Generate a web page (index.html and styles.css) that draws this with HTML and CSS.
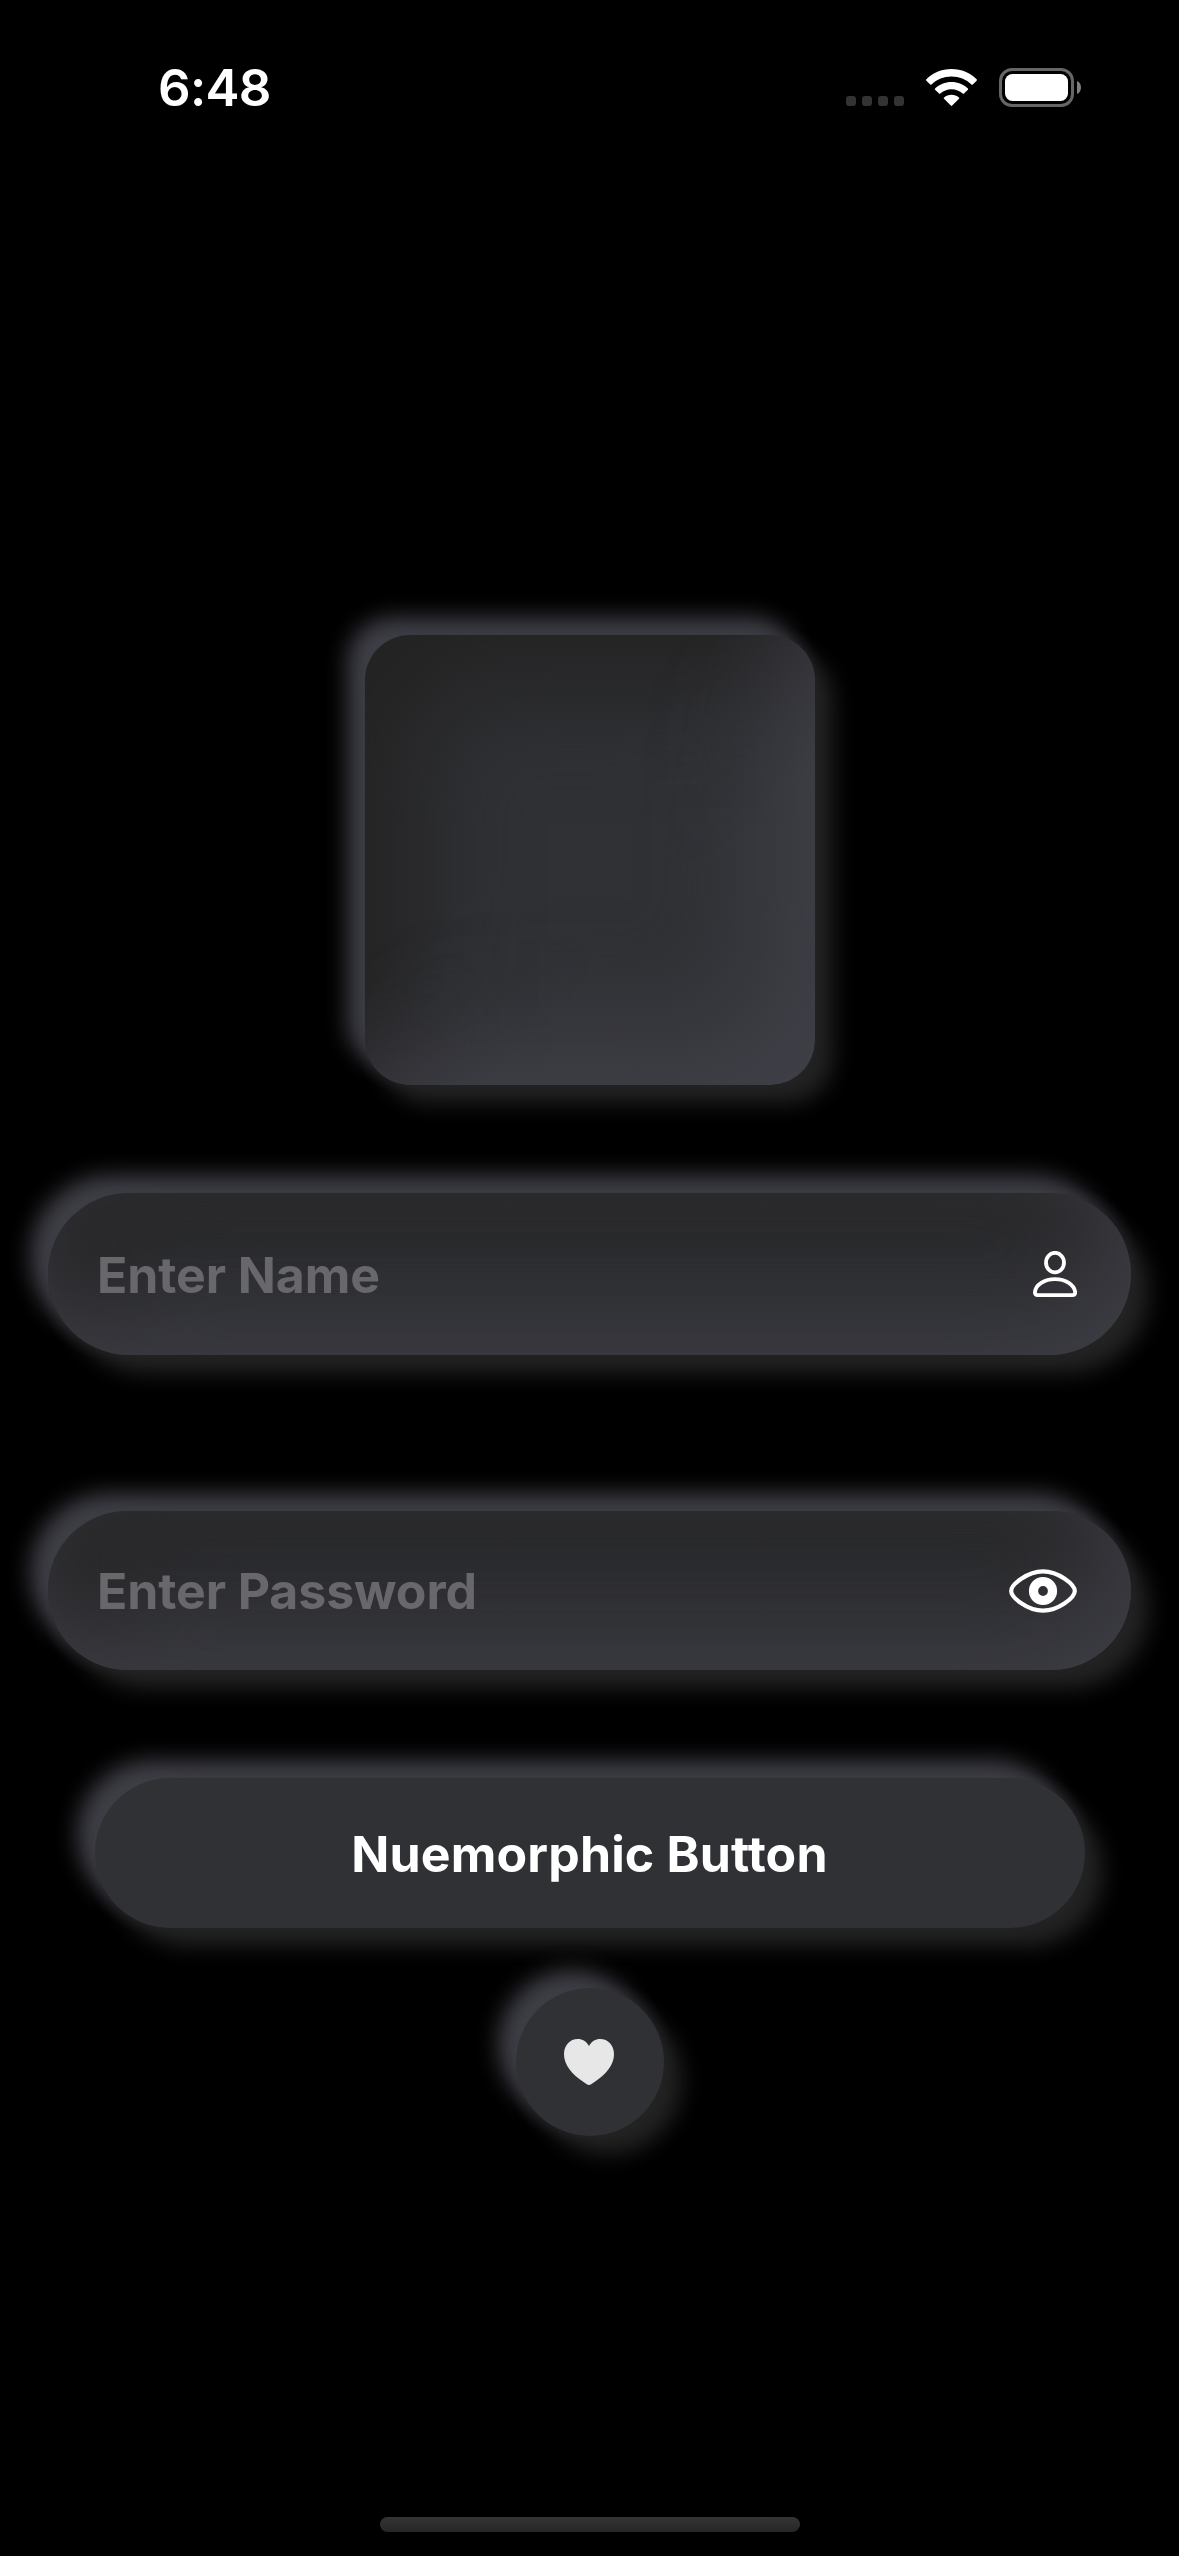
FILE: index.html
```html
<!DOCTYPE html>
<html lang="en">
<head>
<meta charset="utf-8">
<title>Neumorphic form</title>
<link rel="stylesheet" href="styles.css">
</head>
<body>
<div class="screen">
  <header class="status-bar">
    <span class="time">6:48</span>
    <div class="indicators">
      <div class="cellular"><i></i><i></i><i></i><i></i></div>
      <svg class="wifi" viewBox="0 0 51 37" width="51" height="37" fill="#fff">
        <path d="M25.5 0C35.500 0 44.500 4 50.600 10.300Q51.300 11 50.600 11.700L46.800 15.500Q46.200 16.100 45.500 15.400C40.200 10.300 33.200 7.400 25.500 7.400S10.800 10.300 5.500 15.400Q4.800 16.100 4.200 15.500L.4 11.700Q-.3 11 .4 10.300C6.500 4 15.500 0 25.500 0Z"/>
        <path d="M25.500 13C31.900 13 37.700 15.500 41.900 19.500Q42.500 20.200 41.900 20.800L38 24.600Q37.400 25.200 36.700 24.600C33.700 21.900 29.800 20.300 25.500 20.300S17.300 21.900 14.300 24.600Q13.600 25.200 13 24.600L9.100 20.800Q8.500 20.200 9.100 19.500C13.300 15.500 19.100 13 25.500 13Z"/>
        <path d="M25.500 25.800C28.300 25.800 30.900 26.800 32.900 28.500Q33.600 29.200 33 29.800L26.200 36.600Q25.500 37.200 24.800 36.600L18 29.800Q17.400 29.200 18.100 28.500C20.100 26.800 22.700 25.800 25.500 25.800Z"/>
      </svg>
      <svg class="battery" viewBox="0 0 82 39" width="82" height="39">
        <rect x="1.500" y="1.500" width="72" height="36" rx="11.500" fill="none" stroke="#666" stroke-width="3"/>
        <rect x="6" y="6" width="63" height="27" rx="7.500" fill="#fff"/>
        <path d="M78 13C80.700 14.200 82 16.600 82 19.500S80.700 24.800 78 26Z" fill="#808080"/>
      </svg>
    </div>
  </header>

  <main class="content">
    <div class="tile"></div>

    <div class="field field-name">
      <span class="placeholder">Enter Name</span>
      <svg viewBox="0 0 44 46" width="44" height="46" fill="none" stroke="#fff" stroke-width="3.800">
        <ellipse cx="22" cy="11.600" rx="9" ry="9.800"/>
        <path d="M4.800 44.100H39.200Q42.200 44.100 42.200 41.200C41.400 33.800 32.600 28.100 22 28.100S2.600 33.800 1.900 41.200Q1.900 44.100 4.800 44.100Z"/>
      </svg>
    </div>

    <div class="field field-password">
      <span class="placeholder">Enter Password</span>
      <svg viewBox="0 0 68 44" width="68" height="44">
        <path d="M34 2.300C49.500 2.300 65.800 15.500 65.800 22S49.500 41.700 34 41.700S2.200 28.500 2.200 22S18.500 2.300 34 2.300Z" fill="none" stroke="#fff" stroke-width="4.200"/>
        <circle cx="34" cy="22" r="9.500" fill="none" stroke="#fff" stroke-width="9.200"/>
      </svg>
    </div>

    <button class="button raised" type="button">Nuemorphic Button</button>

    <button class="round raised" type="button" aria-label="Like">
      <svg viewBox="0 0 50 46" width="50" height="46">
        <path d="M25 46C23.500 45.800 21.500 44.300 19.500 43C8 35.200 0 26 0 15.200C0 6.300 6 0 13.800 0C18.500 0 22.600 2.400 25 7C27.400 2.400 31.500 0 36.200 0C44 0 50 6.300 50 15.200C50 26 42 35.200 30.500 43C28.500 44.300 26.500 45.800 25 46Z" fill="#e7e7e7"/>
      </svg>
    </button>
  </main>

  <div class="home-indicator"></div>
</div>
</body>
</html>
```
FILE: styles.css
```css
:root {
  --surface: #303135;
  --light: #3f3f47;
  --dark: #232323;
  --outer:
    18px 18px 22px var(--dark),
    -18px -18px 22px var(--light),
    0 0 18px rgba(63, 63, 71, 0.6);
}

* {
  box-sizing: border-box;
}

body {
  margin: 0;
  background: #000;
  font-family: Inter, "Liberation Sans", sans-serif;
}

.screen {
  display: flex;
  flex-direction: column;
  width: 1179px;
  height: 2556px;
  overflow: hidden;
  background: #000;
}

.status-bar {
  display: flex;
  justify-content: space-between;
  align-items: flex-start;
  height: 177px;
  padding: 68px 98px 0 158px;
}

.time {
  color: #fff;
  font-size: 51px;
  font-weight: 600;
  line-height: 40px;
  letter-spacing: -0.7px;
}

.indicators {
  display: flex;
  align-items: flex-start;
}

.cellular {
  display: flex;
  gap: 6px;
  margin: 28px 22px 0 0;
}

.cellular i {
  width: 10px;
  height: 10px;
  border-radius: 3px;
  background: #333;
}

.wifi {
  margin: 1px 22px 0 0;
}

.content {
  display: flex;
  flex: 1;
  flex-direction: column;
  align-items: center;
  padding-top: 458px;
}

.tile,
.raised {
  flex: none;
  background: var(--surface);
  box-shadow: var(--outer);
}

.tile {
  display: grid;
  width: 450px;
  height: 450px;
  border-radius: 45px;
}

/* Inner shading: each half fades out along the diagonal. */
.tile::before,
.tile::after {
  content: "";
  grid-area: 1 / 1;
  border-radius: inherit;
}

.tile::before {
  box-shadow: inset 52px 52px 110px var(--dark);
  mask-image: linear-gradient(135deg, #000 40%, transparent 68%);
}

.tile::after {
  box-shadow: inset -52px -52px 110px var(--light);
  mask-image: linear-gradient(135deg, transparent 36%, #000 64%);
}

.field {
  display: flex;
  flex: none;
  align-items: center;
  justify-content: space-between;
  width: 1083px;
  padding: 0 54px 0 49px;
  border-radius: 81px;
  background: var(--surface);
  box-shadow:
    inset -20px -28px 100px -10px var(--light),
    inset 34px 42px 110px -5px var(--dark),
    var(--outer);
}

.field-name {
  height: 162px;
  margin-top: 108px;
}

.field-password {
  height: 159px;
  margin-top: 156px;
}

.placeholder {
  padding-top: 1px;
  color: #68686c;
  font-size: 50px;
  font-weight: 700;
  line-height: 60px;
  letter-spacing: -0.1px;
}

.button {
  width: 990px;
  height: 150px;
  margin-top: 108px;
  padding: 2px 0 0;
  border: 0;
  border-radius: 75px;
  color: #fff;
  font: 700 50px/60px Inter, "Liberation Sans", sans-serif;
  font-feature-settings: "calt" 0, "liga" 0;
  letter-spacing: 0.15px;
}

.round {
  display: flex;
  align-items: center;
  justify-content: center;
  width: 148px;
  height: 148px;
  margin-top: 60px;
  padding: 0 2px 0 0;
  border: 0;
  border-radius: 50%;
}

.home-indicator {
  align-self: center;
  width: 420px;
  height: 15px;
  margin-bottom: 24px;
  border-radius: 8px;
  background: linear-gradient(#343434, #262626);
}
```
